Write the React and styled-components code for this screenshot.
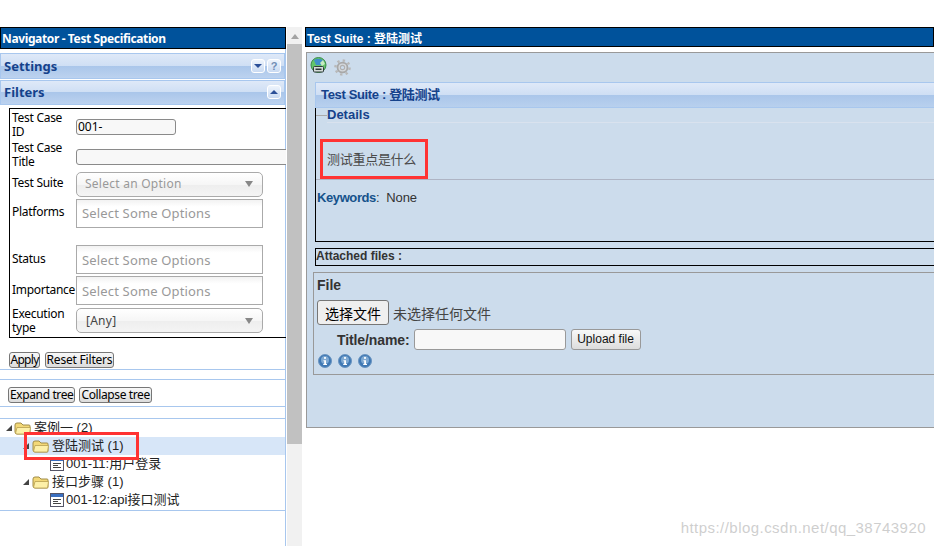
import React from "react";
import styled, { createGlobalStyle } from "styled-components";

const Global = createGlobalStyle`
  html, body { margin: 0; padding: 0; background: #fff; overflow: hidden; }
  body { width: 934px; height: 546px; }
  * { box-sizing: border-box; }
`;
const CJK = `"Noto Sans CJK SC", sans-serif`;
const TAHOMA = `"Noto Sans", ${CJK}`;
const ARIAL = `"Liberation Sans", ${CJK}`;

const Page = styled.div`
  position: relative; width: 934px; height: 546px; overflow: hidden;
  display: flex; padding-top: 27px; font-family: ${ARIAL}; color: #333;
`;
const Left = styled.div`
  width: 286px; flex: none; height: 519px; border-right: 1px solid #a8c7ee;
  display: flex; flex-direction: column;
`;
const Scroll = styled.div`
  width: 15px; flex: none; margin-left: 1px; height: 519px; background: #f1f1f1;
  display: flex; flex-direction: column; align-items: center;
`;
const ArrowUp = styled.div`
  height: 17px; width: 100%; display: flex; align-items: center; justify-content: center; padding-top: 2px;
  &::before { content: ""; border: 4px solid transparent; border-top: 0; border-bottom: 5px solid #a3a3a3; }
`;
const Thumb = styled.div` width: 100%; height: 400px; background: #c1c1c1; `;
const Right = styled.div`
  flex: 1; min-width: 0; margin-left: 3px; display: flex; flex-direction: column;
`;
const Header = styled.div`
  background: #00529b; color: #fff; font-weight: bold; border: 1px solid #000;
  display: flex; align-items: center; white-space: nowrap;
  font-family: ${p => (p.$wide ? TAHOMA : ARIAL)};
  font-size: 12px; height: ${p => p.$h}px; padding-left: ${p => p.$pad}px;
  ${p => (p.$wide ? "margin-right:-1px; letter-spacing:-0.37px;" : "")}
`;
const Accordion = styled.div`
  height: ${p => p.$h}px; margin-top: ${p => p.$mt}px; flex: none;
  border: 1px solid #a8c7ee;
  background: linear-gradient(#dfe9f8 0%, #cfdff4 48%, #aac6ea 50%, #bcd2ef 100%);
  color: #15428b; font-family: ${TAHOMA}; font-weight: bold; font-size: 13px;
  display: flex; align-items: center; justify-content: space-between; padding: 0 3px ${p => p.$pb || 0}px 3px;
`;
const Tools = styled.div` display: flex; gap: 2px; `;
const Tool = styled.div`
  width: 14px; height: 14px; border-radius: 3px; border: 1px solid #fff; background: linear-gradient(#eef4fc,#c9daf2);
  display: flex; align-items: center; justify-content: center; color: #6f8db5; font: bold 11px ${ARIAL};
  &::before {
    content: "${p => (p.$q ? "?" : "")}";
    ${p => (p.$q ? "" : `border: 4px solid transparent; ${p.$up ? "border-top:0;border-bottom:4px solid #2a4f98;" : "border-bottom:0;border-top:4px solid #2a4f98;"}`)}
  }
`;
const FilterBox = styled.div`
  margin: 3px -1px 0 9px; height: 230px; border: 1px solid #000; border-right: 0; overflow: hidden;
  padding-top: 3px; flex: none;
`;
const FRow = styled.div`
  display: flex; height: ${p => p.$h}px; padding-left: 2px;
`;
const FLabel = styled.div`
  width: 64px; flex: none; font: 12px/14px ${TAHOMA}; color: #000; white-space: pre-line;
  margin-top: ${p => p.$mt || 0}px; letter-spacing: -0.28px;
`;
const TextField = styled.div`
  flex: none; width: ${p => p.$w}px; height: 16px; margin-top: ${p => p.$mt}px;
  background: #f8f8f8; border: 1px solid #8a8a8a; border-radius: 3px;
  font: 12px/14px ${TAHOMA}; color: #000; padding-left: 1px;
`;
const Dropdown = styled.div`
  width: 187px; height: 25px; margin-top: ${p => p.$mt || 0}px; flex: none;
  border: 1px solid #aaa; border-radius: 5px;
  background: linear-gradient(#fff 0%, #f6f6f6 50%, #eee 52%, #f4f4f4 100%);
  display: flex; align-items: center; justify-content: space-between;
  padding: 0 9px ${p => p.$pb}px ${p => p.$pl}px;
  font: 12px ${TAHOMA}; color: ${p => p.$c}; letter-spacing: .25px;
  &::after { content: ""; border: 4px solid transparent; border-bottom: 0; border-top: 6px solid #888; }
`;
const MultiBox = styled.div`
  width: 187px; height: 29px; margin-top: ${p => p.$mt || 0}px; flex: none;
  border: 1px solid #aaa; background: linear-gradient(#f2f2f2 0%, #fff 25%);
  padding: 0 0 ${p => p.$pb || 0}px 5px; display: flex; align-items: center;
  font: 13px ${TAHOMA}; color: #999; letter-spacing: .16px;
`;
const BtnRow = styled.div`
  display: flex; gap: ${p => p.$gap}px; padding-left: ${p => p.$pl}px; height: 16px; margin-top: ${p => p.$mt}px; flex: none;
`;
const MiniBtn = styled.div`
  height: 16px; padding: 0 ${p => (p.$w ? 0 : 1)}px; border: 1px solid #777; border-radius: 3px;
  ${p => (p.$w ? `width: ${p.$w}px; text-align: center;` : "")}
  background: linear-gradient(#f8f8f8,#dcdcdc); font: 12px/14px ${TAHOMA}; color: #000; white-space: nowrap;
  letter-spacing: ${p => p.$ls}px;
`;
const Rule = styled.div` height: 1px; background: #a8c7ee; margin-top: ${p => p.$mt}px; flex: none; `;
const Tree = styled.div`
  margin-top: 11px; height: 93px; border: 1px solid #a8c7ee; border-left: 0; border-right-width: 0; flex: none;
  font: 13px/18px ${ARIAL}; color: #222;
`;
const TreeRow = styled.div`
  height: 18px; display: flex; align-items: center; padding-left: ${p => p.$pl}px; white-space: nowrap;
  background: ${p => (p.$sel ? "#d7e6f8" : "transparent")};
`;
const Tri = styled.span`
  width: 0; height: 0; margin-right: ${p => p.$mr}px; flex: none;
  border-style: solid; border-width: 0 0 6px 6px; border-color: transparent transparent #444 transparent;
`;
const TreeText = styled.span` margin-left: 2px; `;
const Panel = styled.div`
  margin-top: 5px; margin-left: 1px; height: 376px; background: #ccdcec;
  border: 1px solid #999; border-right: 0; padding: 3px 0 0 8px;
`;
const IconBar = styled.div` display: flex; gap: 7px; align-items: center; height: 19px; margin-left: -5px; `;
const TitleBar = styled.div`
  margin-top: 7px; height: 26px; border: 1px solid #a8c7ee; border-right: 0;
  background: linear-gradient(#dfe9f8 0%, #cfdff4 48%, #aac6ea 50%, #b8d0ee 100%);
  color: #15428b; font: bold 13px ${ARIAL}; letter-spacing: -0.35px;
  display: flex; align-items: center; padding: 0 0 4px 5px;
`;
const DetailBox = styled.div`
  height: 134px; border-left: 1px solid #000; border-bottom: 1px solid #000;
`;
const Legend = styled.div`
  display: flex; align-items: center; height: 15px; color: #15428b; font: bold 13px ${ARIAL};
  &::before { content: ""; width: 11px; height: 1px; background: #aaa; }
`;
const LegendText = styled.div`
  flex: 1; height: 15px; border-bottom: 1px solid #d9e2ee; line-height: 14px;
`;
const Desc = styled.div`
  height: 57px; border-bottom: 1px solid #aeb4c4; padding: 28px 0 0 11px;
  font: 13px/18px ${ARIAL}; color: #4a4a4a; letter-spacing: -0.28px;
`;
const Keywords = styled.div`
  margin-top: 10px; font: 13px/16px ${ARIAL}; color: #333; padding-left: 1px; letter-spacing: -0.15px;
  b { color: #15528b; letter-spacing: -0.4px; }
`;
const AttachBar = styled.div`
  margin-top: 6px; height: 18px; border: 1px solid #000; border-right: 0; font: bold 12px/15px ${ARIAL}; color: #333;
`;
const FileBox = styled.div`
  margin: 6px 0 0 -2px; height: 103px; border: 1px solid #999; border-right: 0; padding: 4px 0 0 3px;
`;
const FileTitle = styled.div` font: bold 14px/16px ${ARIAL}; color: #333; `;
const ChooseRow = styled.div` display: flex; align-items: center; margin-top: 7px; height: 25px; font: 14px ${ARIAL}; color: #444; gap: 4px; `;
const ChooseBtn = styled.div`
  width: 72px; height: 25px; background: #efefef; border: 1px solid #767676; border-radius: 3px;
  display: flex; align-items: center; justify-content: center; color: #000; font: 14px ${ARIAL};
`;
const TitleRow = styled.div`
  display: flex; align-items: center; height: 21px; margin-top: 4px; padding-left: 20px;
  font: bold 14px ${ARIAL}; color: #333; letter-spacing: -0.1px;
`;
const TitleInput = styled.div`
  width: 152px; height: 21px; margin-left: 4px; background: #f8f8f8; border: 1px solid #999; border-radius: 3px;
`;
const UploadBtn = styled.div`
  width: 70px; height: 21px; margin-left: 5px; border: 1px solid #999; border-radius: 3px;
  background: linear-gradient(#f8f8f8,#ddd); font: 12px/19px ${ARIAL}; color: #111; text-align: center; letter-spacing: 0;
`;
const InfoRow = styled.div` display: flex; gap: 6px; margin: 4px 0 0 1px; height: 14px; `;
const RedMark = styled.div`
  position: absolute; border: 3px solid #f33; pointer-events: none;
  left: ${p => p.$x}px; top: ${p => p.$y}px; width: ${p => p.$w}px; height: ${p => p.$h}px;
`;
const Watermark = styled.div`
  position: absolute; right: 8px; top: 519px; color: rgba(190,190,190,.75);
  font: 15px "Liberation Sans", sans-serif; letter-spacing: .46px;
`;

const Folder = () => (
  <svg width="18" height="14" viewBox="0 0 18 14">
    <path d="M1 4 Q1 2 3 2 H7 L9 4 H15 Q16 4 16 5 V12 Q16 13 15 13 H3 Q1 13 1 11Z" fill="#f3d877" stroke="#a08c48" />
    <path d="M1.500 12.500 L3 6.500 H16.500 L15.500 13 H3Z" fill="#fdf0a8" stroke="#b8a050" strokeWidth=".8" />
  </svg>
);
const Doc = () => (
  <svg width="14" height="14" viewBox="0 0 14 14">
    <rect x=".5" y=".5" width="13" height="13" fill="#fff" stroke="#556" />
    <rect x="1" y="1" width="12" height="3" fill="#3a6fc0" />
    <path d="M3 6.500H11M3 8.500H8M3 10.500H11" stroke="#444" />
  </svg>
);
const Info = () => (
  <svg width="14" height="14" viewBox="0 0 14 14">
    <circle cx="7" cy="7" r="6.500" fill="#3f78b4" stroke="#6a94c0" />
    <circle cx="7" cy="6" r="4" fill="#7fa9d2" />
    <path d="M5.500 6.200H8V10H9V11H5.200V10H6.200V7.200H5.500Z" fill="#fff" />
    <rect x="6.100" y="3" width="1.800" height="1.900" fill="#fff" />
  </svg>
);
const Globe = () => (
  <svg width="17" height="17" viewBox="0 0 17 17">
    <circle cx="8.500" cy="8" r="7.500" fill="#62c56a" stroke="#3a8a48" />
    <path d="M4 3 Q9 0 14 4 L12 8 L6 8Z" fill="#3f8fc8" />
    <path d="M10 6 L13 3 L15 7 L12 9Z" fill="#c8ecc0" />
    <rect x="3.500" y="9.500" width="10" height="5.500" rx="1" fill="#d4dcd8" stroke="#2f3a3a" />
    <rect x="5.500" y="11.500" width="6" height="1.500" fill="#2f3a3a" />
  </svg>
);
const Gear = () => (
  <svg width="17" height="17" viewBox="0 0 24 24" style={{ marginTop: 4 }}>
    <circle cx="12" cy="12" r="7" fill="#d4d8dc" stroke="#a8a8a8" strokeWidth="2.500" />
    <circle cx="12" cy="12" r="10" fill="none" stroke="#b8b8b8" strokeWidth="3.500" strokeDasharray="3.300 4.550" />
    <circle cx="12" cy="12" r="3" fill="#ccdcec" stroke="#b0b0b0" strokeWidth="1.500" />
  </svg>
);

export default function App() {
  return (
    <Page>
      <Global />
      <Left>
        <Header $wide $h={22} $pad={1}>Navigator - Test Specification</Header>
        <Accordion $h={26} $mt={4}>Settings<Tools><Tool /><Tool $q /></Tools></Accordion>
        <Accordion $h={25} $mt={1} $pb={2}>Filters<Tools><Tool $up /></Tools></Accordion>
        <FilterBox>
          <FRow $h={30}><FLabel $mt={-1}>{"Test Case\nID"}</FLabel><TextField $w={100} $mt={7}>001-</TextField></FRow>
          <FRow $h={22}><FLabel $mt={-1}>{"Test Case\nTitle"}</FLabel><TextField $w={240} $mt={7} /></FRow>
          <FRow $h={27}><FLabel $mt={12}>Test Suite</FLabel><Dropdown $mt={8} $pl={8} $pb={2} $c="#999">Select an Option</Dropdown></FRow>
          <FRow $h={47}><FLabel $mt={14}>Platforms</FLabel><MultiBox $mt={8} $pb={1}>Select Some Options</MultiBox></FRow>
          <FRow $h={31}><FLabel $mt={14}>Status</FLabel><MultiBox $mt={7}>Select Some Options</MultiBox></FRow>
          <FRow $h={32}><FLabel $mt={14}>Importance</FLabel><MultiBox $mt={7}>Select Some Options</MultiBox></FRow>
          <FRow $h={32}><FLabel $mt={6}>{"Execution\ntype"}</FLabel><Dropdown $mt={7} $pl={9} $pb={0} $c="#444">[Any]</Dropdown></FRow>
        </FilterBox>
        <BtnRow $pl={9} $gap={5} $mt={14}><MiniBtn $w={31} $ls={-0.7}>Apply</MiniBtn><MiniBtn $w={69} $ls={-0.2}>Reset Filters</MiniBtn></BtnRow>
        <Rule $mt={1} />
        <Rule $mt={9} />
        <BtnRow $pl={8} $gap={4} $mt={7}><MiniBtn $ls={-0.38}>Expand tree</MiniBtn><MiniBtn $ls={-0.38}>Collapse tree</MiniBtn></BtnRow>
        <Rule $mt={3} />
        <Tree>
          <TreeRow $pl={6}><Tri $mr={2} /><Folder /><TreeText>案例一 (2)</TreeText></TreeRow>
          <TreeRow $pl={23} $sel><Tri $mr={3} /><Folder /><TreeText>登陆测试 (1)</TreeText></TreeRow>
          <TreeRow $pl={50}><Doc /><TreeText>001-11:用户登录</TreeText></TreeRow>
          <TreeRow $pl={23}><Tri $mr={3} /><Folder /><TreeText>接口步骤 (1)</TreeText></TreeRow>
          <TreeRow $pl={50}><Doc /><TreeText>001-12:api接口测试</TreeText></TreeRow>
        </Tree>
      </Left>
      <Scroll><ArrowUp /><Thumb /></Scroll>
      <Right>
        <Header $h={20} $pad={1}>Test Suite : 登陆测试</Header>
        <Panel>
          <IconBar><Globe /><Gear /></IconBar>
          <TitleBar>Test Suite : 登陆测试</TitleBar>
          <DetailBox>
            <Legend><LegendText>Details</LegendText></Legend>
            <Desc>测试重点是什么</Desc>
            <Keywords><b>Keywords</b>: &nbsp;None</Keywords>
          </DetailBox>
          <AttachBar>Attached files :</AttachBar>
          <FileBox>
            <FileTitle>File</FileTitle>
            <ChooseRow><ChooseBtn>选择文件</ChooseBtn>未选择任何文件</ChooseRow>
            <TitleRow>Title/name:<TitleInput /><UploadBtn>Upload file</UploadBtn></TitleRow>
            <InfoRow><Info /><Info /><Info /></InfoRow>
          </FileBox>
        </Panel>
      </Right>
      <RedMark $x={24} $y={432} $w={115} $h={28} />
      <RedMark $x={320} $y={139} $w={108} $h={40} />
      <Watermark>https://blog.csdn.net/qq_38743920</Watermark>
    </Page>
  );
}
